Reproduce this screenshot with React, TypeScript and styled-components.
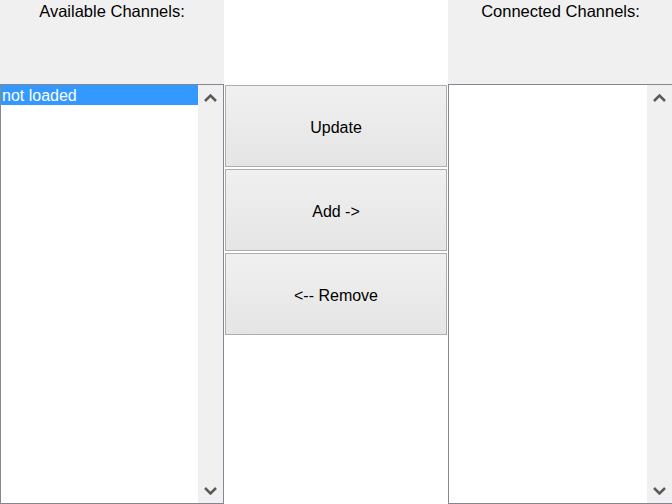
import React from "react";
import styled, { createGlobalStyle } from "styled-components";

const Global = createGlobalStyle`
  html, body { margin: 0; padding: 0; background: #ffffff; overflow: hidden; }
  body { width: 672px; height: 504px; font-family: "Liberation Sans", Arial, sans-serif; }
`;

const Page = styled.div`
  width: 672px;
  height: 504px;
  overflow: hidden;
  display: grid;
  grid-template-columns: 224px 224px 225px;
  grid-template-rows: 84px 420px;
`;

const Header = styled.div<{ $gray?: boolean }>`
  background: ${(p) => (p.$gray ? "#f0f0f0" : "#ffffff")};
  display: flex;
  justify-content: center;
  align-items: flex-start;
  padding-top: 1px;
  font-size: 16.5px;
  color: #000;
  line-height: 20px;
`;

const ListBox = styled.div`
  box-sizing: border-box;
  border: 1px solid #828790;
  background: #fff;
  display: flex;
  height: 420px;
`;

const Items = styled.div`
  flex: 1;
  display: flex;
  flex-direction: column;
`;

const Item = styled.div<{ $selected?: boolean }>`
  box-sizing: border-box;
  height: 20px;
  line-height: 20px;
  padding: 1px 0 0 1px;
  font-size: 16px;
  color: ${(p) => (p.$selected ? "#ffffff" : "#000")};
  background: ${(p) => (p.$selected ? "#3399ff" : "transparent")};
`;

const ScrollBar = styled.div`
  width: 25px;
  background: #f0f0f0;
  display: flex;
  flex-direction: column;
  justify-content: space-between;
`;

const Arrow = styled.div`
  height: 25px;
  display: flex;
  align-items: center;
  justify-content: center;
`;

const ButtonStack = styled.div`
  display: flex;
  flex-direction: column;
  gap: 2px;
  padding: 1px 1px 0 1px;
`;

const Button = styled.button`
  box-sizing: border-box;
  height: 82px;
  width: 100%;
  margin: 0;
  border: 1px solid #adadad;
  background: linear-gradient(#f0f0f0, #e5e5e5);
  font-family: "Liberation Sans", Arial, sans-serif;
  font-size: 16px;
  color: #000;
  padding: 0;
  padding-top: 4px;
`;

const Chevron = ({ up }: { up?: boolean }) => (
  <svg width="13" height="8" viewBox="0 0 13 8">
    <path
      d={up ? "M1 7 L6.5 1.5 L12 7" : "M1 1 L6.5 6.5 L12 1"}
      fill="none"
      stroke="#5a5a5a"
      strokeWidth="2.5"
    />
  </svg>
);

const List = ({ items }: { items: string[] }) => (
  <ListBox>
    <Items>
      {items.map((t, i) => (
        <Item key={i} $selected={i === 0}>
          {t}
        </Item>
      ))}
    </Items>
    <ScrollBar>
      <Arrow>
        <Chevron up />
      </Arrow>
      <Arrow>
        <Chevron />
      </Arrow>
    </ScrollBar>
  </ListBox>
);

export default function App() {
  return (
    <>
      <Global />
      <Page>
        <Header $gray>Available Channels:</Header>
        <Header />
        <Header $gray>Connected Channels:</Header>
        <List items={["not loaded"]} />
        <ButtonStack>
          <Button>Update</Button>
          <Button>Add -&gt;</Button>
          <Button>&lt;-- Remove</Button>
        </ButtonStack>
        <List items={[]} />
      </Page>
    </>
  );
}
